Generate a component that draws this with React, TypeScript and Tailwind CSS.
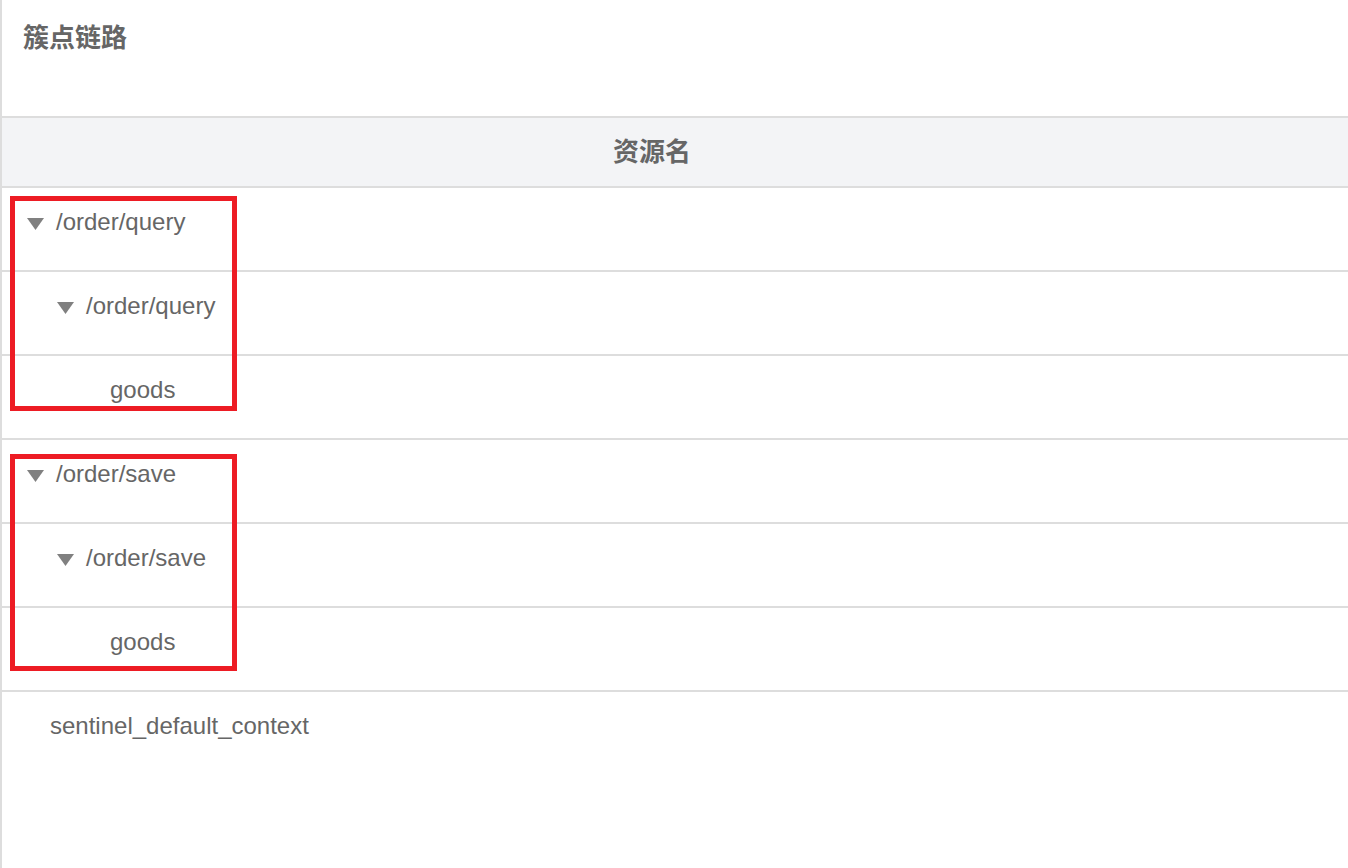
import React from 'react';

type TreeNode = {
  name: string;
  level: number;
  expandable: boolean;
};

const ROWS: TreeNode[] = [
  { name: '/order/query', level: 0, expandable: true },
  { name: '/order/query', level: 1, expandable: true },
  { name: 'goods', level: 2, expandable: false },
  { name: '/order/save', level: 0, expandable: true },
  { name: '/order/save', level: 1, expandable: true },
  { name: 'goods', level: 2, expandable: false },
  { name: 'sentinel_default_context', level: 0, expandable: false },
];

const INDENT = ['pl-[25px]', 'pl-[55px]', 'pl-[85px]'];

function Caret() {
  return (
    <svg width="17" height="12" viewBox="0 0 17 12" className="mt-[4px] shrink-0">
      <polygon points="0,0 17,0 8.5,12" fill="#808080" />
    </svg>
  );
}

function TreeRow({ node, last }: { node: TreeNode; last: boolean }) {
  return (
    <div className={last ? 'h-[84px]' : 'h-[84px] border-b-2 border-[#dddddd]'}>
      <div className={`flex items-center pt-[20px] ${INDENT[node.level]}`}>
        {node.expandable ? (
          <>
            <Caret />
            <span className="ml-[12px] text-[24px] leading-[28px] text-[#666666]">{node.name}</span>
          </>
        ) : (
          <span className="ml-[23px] text-[24px] leading-[28px] text-[#666666]">{node.name}</span>
        )}
      </div>
    </div>
  );
}

export default function App() {
  return (
    <div
      className="relative min-h-screen w-full bg-white"
      style={{ fontFamily: '"Liberation Sans", "Noto Sans CJK SC", sans-serif' }}
    >
      <div className="min-h-screen border-l-2 border-[#dddddd]">
        <div className="h-[116px] pl-[21px] pt-[25px]">
          <h2 className="text-[26px] font-bold leading-[26px] text-[#666666]">簇点链路</h2>
        </div>

        <div className="flex h-[72px] items-center justify-center border-y-2 border-[#dddddd] bg-[#f3f4f6] pr-[46px]">
          <span className="text-[26px] font-bold text-[#666666]">资源名</span>
        </div>

        <div>
          {ROWS.map((node, i) => (
            <TreeRow key={i} node={node} last={i === ROWS.length - 1} />
          ))}
        </div>
      </div>

      {/* annotation boxes */}
      <div className="pointer-events-none absolute left-[10px] top-[196px] h-[215px] w-[227px] border-[5px] border-[#ed1c24]" />
      <div className="pointer-events-none absolute left-[10px] top-[454px] h-[217px] w-[227px] border-[5px] border-[#ed1c24]" />
    </div>
  );
}
